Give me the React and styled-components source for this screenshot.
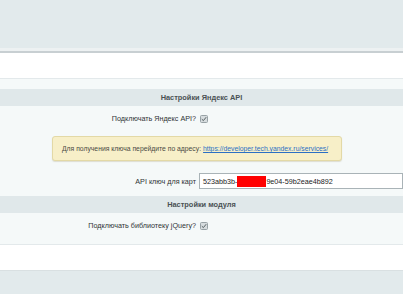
import React from "react";
import styled, { createGlobalStyle } from "styled-components";

const GlobalStyle = createGlobalStyle`
  body {
    margin: 0;
    background: #fff;
    font-family: "Liberation Sans", Arial, sans-serif;
    color: #333;
  }
`;

const Check = () => (
  <CheckBox>
    <svg width="6" height="6" viewBox="0 0 6 6">
      <path d="M0.8 3.2 L2.4 4.6 L5.2 1.2" fill="none" stroke="#4a5357" strokeWidth="0.9" />
    </svg>
  </CheckBox>
);

const App = () => {
  return (
    <>
      <GlobalStyle />
      <Page>
        <TopBar />
        <Spacer />
        <Form>
          <SectionHead>Настройки Яндекс API</SectionHead>
          <Row>
            <Label>Подключать Яндекс API?</Label>
            <Value>
              <Check />
            </Value>
          </Row>
          <NoteRow>
            <Note>
              Для получения ключа перейдите по адресу:{" "}
              <a href="#">https://developer.tech.yandex.ru/services/</a>
            </Note>
          </NoteRow>
          <Row tall>
            <Label>API ключ для карт</Label>
            <Value>
              <Field>
                523abb3b-<Redact />9e04-59b2eae4b892
              </Field>
            </Value>
          </Row>
          <SectionHead>Настройки модуля</SectionHead>
          <Row last>
            <Label>Подключать библиотеку jQuery?</Label>
            <Value>
              <Check />
            </Value>
          </Row>
        </Form>
        <Spacer />
        <BottomBar />
      </Page>
    </>
  );
};

const Page = styled.div`
  width: 403px;
  height: 294px;
  overflow: hidden;
  display: flex;
  flex-direction: column;
`;

const TopBar = styled.div`
  height: 48px;
  flex-shrink: 0;
  background: #e2eaec;
  border-bottom: 3px solid #edf1f2;
  box-shadow: 0 2px 0 #c8cfd2;
  margin-bottom: 2px;
`;

const Spacer = styled.div`
  height: 25px;
  flex-shrink: 0;
  background: #fff;
`;

const Form = styled.div`
  flex-shrink: 0;
  background: #f5f9f9;
  border-top: 1px solid #e3e9eb;
  border-bottom: 1px solid #e3e9eb;
  padding: 10px 0 6px;
`;

const SectionHead = styled.div`
  height: 17px;
  line-height: 17px;
  background: #e0e8ea;
  text-align: center;
  font-size: 7.4px;
  font-weight: bold;
  color: #4a5154;
`;

const Row = styled.div`
  display: grid;
  grid-template-columns: 197px 1fr;
  align-items: center;
  height: ${(p) => (p.tall ? "30px" : "25px")};
  font-size: 7.2px;
`;

const Label = styled.div`
  text-align: right;
  padding-right: 1px;
  color: #2f3436;
`;

const Value = styled.div`
  display: flex;
  align-items: center;
  padding-left: 2px;
`;

const CheckBox = styled.span`
  width: 8px;
  height: 8px;
  box-sizing: border-box;
  border: 1px solid #98a2a6;
  border-radius: 1.5px;
  background: #d6dcde;
  display: inline-flex;
  align-items: center;
  justify-content: center;
  margin-left: 1px;
`;

const NoteRow = styled.div`
  height: 35px;
  display: flex;
  align-items: center;
  padding-left: 52px;
`;

const Note = styled.div`
  width: 290px;
  height: 25px;
  box-sizing: border-box;
  background: #f7efc8;
  border: 1px solid #e3d9a6;
  border-radius: 3px;
  box-shadow: 0 1px 1px rgba(150, 140, 90, 0.25);
  padding-left: 9px;
  display: flex;
  align-items: center;
  font-size: 6.8px;
  color: #4a4a44;

  a {
    color: #2b6fc4;
    text-decoration: underline;
    margin-left: 2px;
  }
`;

const Field = styled.div`
  width: 204px;
  height: 16px;
  box-sizing: border-box;
  background: #fff;
  border: 1px solid #a9b3b7;
  display: flex;
  align-items: center;
  padding-left: 3px;
  font-size: 7.2px;
  color: #222;
  white-space: nowrap;
`;

const Redact = styled.span`
  display: inline-block;
  width: 29px;
  height: 11px;
  background: #ff0000;
`;

const BottomBar = styled.div`
  flex: 1;
  background: #e2eaec;
  border-top: 1px solid #d9e0e2;
`;

export default App;
